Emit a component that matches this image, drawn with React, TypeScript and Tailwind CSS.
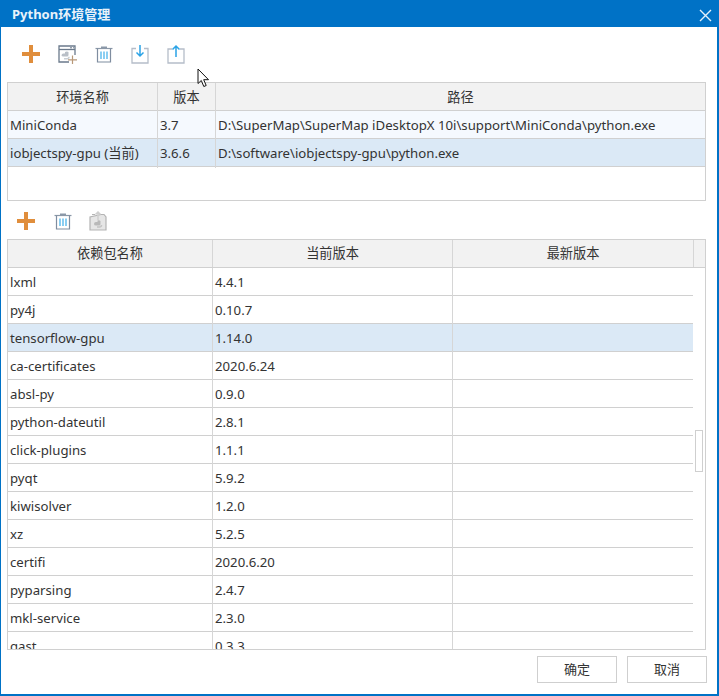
const envRows = [
  { name: "MiniConda", version: "3.7", path: "D:\\SuperMap\\SuperMap iDesktopX 10i\\support\\MiniConda\\python.exe", selected: false },
  { name: "iobjectspy-gpu (当前)", version: "3.6.6", path: "D:\\software\\iobjectspy-gpu\\python.exe", selected: true },
];

const packages = [
  ["lxml", "4.4.1"],
  ["py4j", "0.10.7"],
  ["tensorflow-gpu", "1.14.0"],
  ["ca-certificates", "2020.6.24"],
  ["absl-py", "0.9.0"],
  ["python-dateutil", "2.8.1"],
  ["click-plugins", "1.1.1"],
  ["pyqt", "5.9.2"],
  ["kiwisolver", "1.2.0"],
  ["xz", "5.2.5"],
  ["certifi", "2020.6.20"],
  ["pyparsing", "2.4.7"],
  ["mkl-service", "2.3.0"],
  ["gast", "0.3.3"],
];

function PlusIcon() {
  return (
    <svg width="18" height="18" viewBox="0 0 18 18">
      <path d="M7 0h4v7h7v4h-7v7H7v-7H0V7h7z" fill="#e08e3c" />
    </svg>
  );
}

function NewEnvIcon() {
  return (
    <svg width="19" height="19" viewBox="0 0 19 19" fill="none">
      <path d="M17 10V1H1v16h10" stroke="#6b7a8c" strokeWidth="1.300" />
      <path d="M1 4.500h16" stroke="#6b7a8c" strokeWidth="1.300" />
      <path d="M12 2.800h2M15 2.800h1" stroke="#6b7a8c" strokeWidth="1" />
      <path d="M3.500 10.500q0-2 2-2h1.500v-1.500q2-1 3.500 0v3q0 1.500-1.500 1.500H5.500q-2 0-2-1z" fill="#b9bfc7" />
      <path d="M6 13.800h3q2 0 2-2" stroke="#c9ced4" strokeWidth="1.500" />
      <path d="M14.500 10.500v8.500M10 14.800h9" stroke="#b89878" strokeWidth="1.200" />
    </svg>
  );
}

function TrashIcon() {
  return (
    <svg width="18" height="18" viewBox="0 0 18 18" fill="none">
      <path d="M6 1.500h6V3H6z" fill="#8b98a8" />
      <path d="M0.500 3.500h17" stroke="#8b98a8" strokeWidth="1.200" />
      <path d="M2.500 3.500V17h13V3.500" stroke="#7f8da0" strokeWidth="1.200" />
      <path d="M6 6.500v7.500M9 6.500v7.500M12 6.500v7.500" stroke="#3daee9" strokeWidth="1.200" />
    </svg>
  );
}

function ImportIcon() {
  return (
    <svg width="18" height="20" viewBox="0 0 18 20" fill="none">
      <path d="M5 4.500H1V19h16V4.500h-4" stroke="#b5bdc9" strokeWidth="1.300" />
      <path d="M9 1v11M5.500 8.500 9 12l3.500-3.500" stroke="#2ba3e6" strokeWidth="1.500" />
    </svg>
  );
}

function ExportIcon() {
  return (
    <svg width="18" height="20" viewBox="0 0 18 20" fill="none">
      <path d="M5 5H1v14h16V5h-4" stroke="#b5bdc9" strokeWidth="1.300" />
      <path d="M9 13V2M5.500 5.500 9 2l3.500 3.500" stroke="#2ba3e6" strokeWidth="1.500" />
    </svg>
  );
}

function PackageExportIcon() {
  return (
    <svg className="-ml-[2px]" width="18" height="20" viewBox="0 0 18 20" fill="none">
      <path d="M3 3.500h3M12 3.500h3L17 6v13H1V6z" stroke="#b4b4b4" strokeWidth="1.200" fill="#e6e6e6" />
      <path d="M9 9V1M6.500 3.500 9 1l2.500 2.500" stroke="#cfcfcf" strokeWidth="1.500" />
      <path d="M5 13q0-2 2-2h1.500V9.500q2-.5 3 .5v3q0 1.500-1.500 1.500H7q-2 0-2-1.500z" fill="#b9b9b9" />
      <path d="M8 16h2.500q2 0 2-2" stroke="#c4c4c4" strokeWidth="1.500" />
    </svg>
  );
}

function Cursor() {
  return (
    <svg className="absolute left-[196px] top-[68px]" width="14" height="21" viewBox="0 0 14 21" fill="none">
      <path d="M1 1v14.500l3.300-3 2.500 6 2.400-1-2.500-5.800h4.800z" fill="#fff" stroke="#111" strokeWidth="1" />
    </svg>
  );
}

export default function App() {
  return (
    <div className="relative w-[719px] h-[696px] overflow-hidden flex flex-col bg-white border-l border-r-2 border-b-2 border-[#0072c6] font-['Noto_Sans','Noto_Sans_CJK_SC',sans-serif] text-[13.2px] text-[#333]">
      {/* Title bar */}
      <div className="h-[27px] flex items-start justify-between bg-[#0072c6] pl-[11px] pr-[5px] shrink-0">
        <span className="mt-[5px] text-[13px] font-bold text-[#e8f2fa]">Python环境管理</span>
        <svg className="mt-[9px]" width="13" height="13" viewBox="0 0 13 13" fill="none">
          <path d="M1 1l11 11M12 1 1 12" stroke="#e6f1fa" strokeWidth="1.400" />
        </svg>
      </div>

      {/* Environment toolbar */}
      <div className="h-[55px] flex items-center gap-[18px] pl-[21px] pb-[1px] shrink-0">
        <PlusIcon />
        <NewEnvIcon />
        <TrashIcon />
        <ImportIcon />
        <ExportIcon />
      </div>

      {/* Environment table */}
      <div className="ml-[6px] w-[699px] h-[119px] border border-[#d0d0d0] shrink-0">
        <div className="grid grid-cols-[150px_58px_1fr] h-[28px] bg-[#f2f2f2] border-b border-[#d0d0d0] text-center">
          <div className="border-r border-[#d6d6d6] leading-[29px]">环境名称</div>
          <div className="border-r border-[#d6d6d6] leading-[29px]">版本</div>
          <div className="leading-[29px]">路径</div>
        </div>
        {envRows.map((row) => (
          <div
            key={row.name}
            className={`grid grid-cols-[150px_58px_1fr] h-[28px] border-b border-[#d0d0d0] ${row.selected ? "bg-[#dbe9f6]" : "bg-[#f5f9fe]"}`}
          >
            <div className="border-r border-[#d6d6d6] pl-[2px] leading-[29px] whitespace-nowrap">{row.name}</div>
            <div className="border-r border-[#d6d6d6] pl-[2px] leading-[29px]">{row.version}</div>
            <div className="pl-[2px] leading-[29px] whitespace-nowrap">{row.path}</div>
          </div>
        ))}
      </div>

      {/* Package toolbar */}
      <div className="h-[38px] flex items-center gap-[19px] pl-[16px] pt-[1px] shrink-0">
        <PlusIcon />
        <TrashIcon />
        <PackageExportIcon />
      </div>

      {/* Package table */}
      <div className="relative ml-[6px] w-[699px] h-[411px] border border-[#d0d0d0] overflow-hidden shrink-0">
        <div className="grid grid-cols-[205px_240px_241px_1fr] h-[28px] bg-[#f2f2f2] border-b border-[#d0d0d0] text-center">
          <div className="border-r border-[#d6d6d6] leading-[27px]">依赖包名称</div>
          <div className="border-r border-[#d6d6d6] leading-[27px]">当前版本</div>
          <div className="border-r border-[#d6d6d6] leading-[27px]">最新版本</div>
          <div />
        </div>
        {packages.map(([name, version]) => (
          <div
            key={name}
            className={`grid grid-cols-[205px_240px_240px] w-[685px] h-[28px] border-b border-[#d0d0d0] ${name === "tensorflow-gpu" ? "bg-[#dbe9f6]" : "bg-white"}`}
          >
            <div className="border-r border-[#d6d6d6] pl-[2px] leading-[29px]">{name}</div>
            <div className="border-r border-[#d6d6d6] pl-[2px] leading-[29px]">{version}</div>
            <div />
          </div>
        ))}
        {/* Scrollbar thumb */}
        <div className="absolute left-[687px] top-[190px] w-[8px] h-[42px] border border-[#cfcfcf] bg-white" />
      </div>

      {/* Buttons */}
      <div className="flex justify-end gap-[10px] pt-[6px] pr-[10px]">
        <button className="w-[80px] h-[27px] border border-[#cfcfcf] bg-white text-[13px] text-[#333]">确定</button>
        <button className="w-[80px] h-[27px] border border-[#cfcfcf] bg-white text-[13px] text-[#333]">取消</button>
      </div>

      <Cursor />
    </div>
  );
}
